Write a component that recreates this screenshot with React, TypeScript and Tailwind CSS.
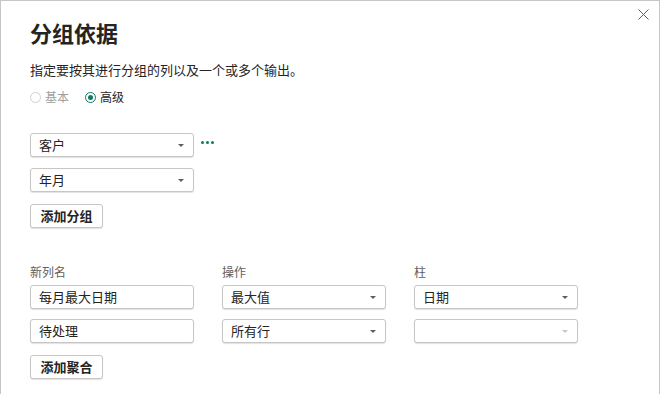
const font = {
  fontFamily: '"Segoe UI", "Noto Sans CJK SC", "Noto Sans", sans-serif',
};

function Caret({ light }: { light?: boolean }) {
  return (
    <svg width="6" height="3" viewBox="0 0 6 3" className="shrink-0" aria-hidden>
      <path d="M0 0h6L3 3z" fill={light ? "#c8c6c4" : "#605e5c"} />
    </svg>
  );
}

function Select({ value, light }: { value?: string; light?: boolean }) {
  return (
    <div className="flex h-[24px] w-[164px] items-center justify-between rounded-[3px] border border-[#c8c6c4] bg-white pl-[8px] pr-[9px] text-[13px] text-[#252423] shadow-[0_1px_1px_rgba(0,0,0,0.12)]">
      <span>{value}</span>
      <Caret light={light} />
    </div>
  );
}

function TextInput({ value }: { value: string }) {
  return (
    <div className="flex h-[24px] w-[164px] items-center rounded-[3px] border border-[#c8c6c4] bg-white pl-[8px] text-[13px] text-[#252423] shadow-[0_1px_1px_rgba(0,0,0,0.12)]">
      {value}
    </div>
  );
}

function Button({ label }: { label: string }) {
  return (
    <div className="flex h-[24px] w-[73px] items-center justify-center rounded-[3px] border border-[#c8c6c4] bg-white text-[13px] font-bold text-[#252423] shadow-[0_1px_1px_rgba(0,0,0,0.12)]">
      {label}
    </div>
  );
}

function Radio({ label, checked }: { label: string; checked?: boolean }) {
  return (
    <div className="flex items-center gap-[4px]">
      {checked ? (
        <span className="flex h-[11px] w-[11px] items-center justify-center rounded-full border border-[#117865]">
          <span className="h-[5px] w-[5px] rounded-full bg-[#117865]" />
        </span>
      ) : (
        <span className="h-[11px] w-[11px] rounded-full border border-[#d2d0ce]" />
      )}
      <span className={checked ? "text-[#252423]" : "text-[#a19f9d]"}>{label}</span>
    </div>
  );
}

export default function App() {
  return (
    <div style={font} className="h-[394px] w-[661px] bg-white">
      <div className="relative h-[394px] w-[660px] border-l border-r border-t border-[#c8c6c4] pl-[29px] pt-[16px]">
        {/* close */}
        <svg
          width="11"
          height="11"
          viewBox="0 0 11 11"
          className="absolute right-[10px] top-[8px]"
          aria-hidden
        >
          <path d="M0.5 0.5l10 10M10.5 0.5l-10 10" stroke="#605e5c" strokeWidth="1" />
        </svg>

        <h1 className="text-[22px] font-bold leading-[30px] text-[#252423]">分组依据</h1>
        <p className="mt-[13px] text-[13px] leading-[20px] text-[#252423]">
          指定要按其进行分组的列以及一个或多个输出。
        </p>

        <div className="mt-[7px] flex h-[20px] items-center gap-[16px] text-[12px]">
          <Radio label="基本" />
          <Radio label="高级" checked />
        </div>

        {/* group by */}
        <div className="mt-[26px] flex flex-col gap-[11px]">
          <div className="flex items-start gap-[7px]">
            <Select value="客户" />
            <div className="mt-[8px] flex gap-[2px]">
              <span className="h-[3px] w-[3px] rounded-full bg-[#117865]" />
              <span className="h-[3px] w-[3px] rounded-full bg-[#117865]" />
              <span className="h-[3px] w-[3px] rounded-full bg-[#117865]" />
            </div>
          </div>
          <Select value="年月" />
        </div>
        <div className="mt-[12px]">
          <Button label="添加分组" />
        </div>

        {/* aggregations */}
        <div className="mt-[36px] grid grid-cols-[164px_164px_164px] gap-x-[28px] gap-y-[10px]">
          <div className="-mb-[5px] text-[12px] leading-[16px] text-[#605e5c]">新列名</div>
          <div className="-mb-[5px] text-[12px] leading-[16px] text-[#605e5c]">操作</div>
          <div className="-mb-[5px] text-[12px] leading-[16px] text-[#605e5c]">柱</div>

          <TextInput value="每月最大日期" />
          <Select value="最大值" />
          <Select value="日期" />

          <TextInput value="待处理" />
          <Select value="所有行" />
          <Select light />
        </div>
        <div className="mt-[12px]">
          <Button label="添加聚合" />
        </div>
      </div>
    </div>
  );
}
